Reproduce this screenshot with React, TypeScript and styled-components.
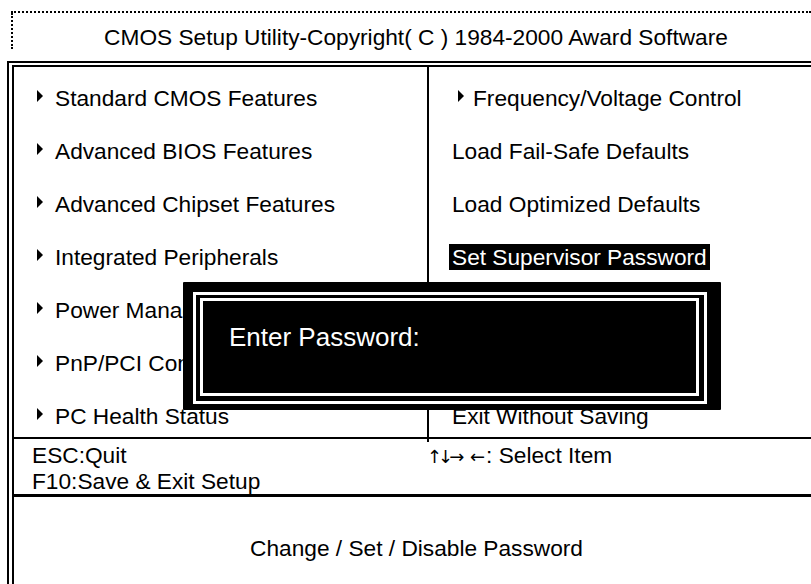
import React from 'react';
import styled, { createGlobalStyle } from 'styled-components';

const GlobalStyle = createGlobalStyle`
  html, body {
    margin: 0;
    padding: 0;
    background: #fff;
  }
  body {
    font-family: "Liberation Sans", Arial, sans-serif;
    color: #000;
  }
`;

const Screen = styled.div`
  position: relative;
  width: 811px;
  height: 584px;
  overflow: hidden;
  background: #fff;
  padding-top: 11px;
  box-sizing: border-box;
  font-size: 22.7px;
`;

const TitleBar = styled.div`
  position: relative;
  margin-left: 11px;
  height: 48px;
  padding-left: 10px;
  border-top: 2px dotted #000;
  display: flex;
  align-items: center;
  justify-content: center;

  &::before {
    content: '';
    position: absolute;
    left: 0;
    top: 0;
    height: 36px;
    border-left: 2px dotted #000;
  }
`;

const MainFrame = styled.div`
  margin-left: 7px;
  border-left: 7px double #000;
  border-top: 6px double #000;
`;

const Menu = styled.div`
  display: grid;
  grid-template-columns: 415px 1fr;
  height: 370px;
`;

const Column = styled.div<{ $divider?: boolean }>`
  display: grid;
  grid-template-rows: repeat(7, 53px);
  padding-top: 4px;
  box-sizing: border-box;
  border-right: ${({ $divider }) => ($divider ? '2px solid #000' : 'none')};
`;

const Item = styled.div<{ $indent: number }>`
  display: flex;
  align-items: center;
  padding-left: ${({ $indent }) => $indent}px;
  white-space: nowrap;
`;

const Arrow = styled.span<{ $gap: number }>`
  display: inline-block;
  width: 0;
  height: 0;
  border-left: 6px solid #000;
  border-top: 6px solid transparent;
  border-bottom: 6px solid transparent;
  margin-right: ${({ $gap }) => $gap}px;
  transform: translateY(-2px);
`;

const Label = styled.span<{ $selected?: boolean }>`
  display: inline-block;
  line-height: 26px;
  padding: 0 3px;
  margin-left: -3px;
  background: ${({ $selected }) => ($selected ? '#000' : 'transparent')};
  color: ${({ $selected }) => ($selected ? '#fff' : '#000')};
`;

const KeyBar = styled.div`
  display: grid;
  grid-template-columns: 413px 1fr;
  height: 60px;
  box-sizing: border-box;
  padding-top: 3px;
  border-top: 2px solid #000;
  border-bottom: 3px solid #000;
  line-height: 26px;
`;

const KeyColumn = styled.div<{ $pad: number }>`
  padding-left: ${({ $pad }) => $pad}px;
  white-space: nowrap;
`;

const KeyArrows = styled.span`
  font-family: "DejaVu Sans", sans-serif;
  font-size: 18px;
  letter-spacing: -4px;
  word-spacing: 8px;
  color: #000;
  margin-right: 5px;
`;

const HelpArea = styled.div`
  height: 120px;
  padding-top: 38px;
  padding-left: 8px;
  box-sizing: border-box;
  text-align: center;
  line-height: 26px;
`;

const Dialog = styled.div`
  position: absolute;
  left: 183px;
  top: 282px;
  width: 538px;
  height: 128px;
  box-sizing: border-box;
  padding: 10px 14px 6px 10px;
  background: #000;
  border-radius: 1px;
`;

const OuterFrame = styled.div`
  height: 100%;
  box-sizing: border-box;
  border: 3px solid #fff;
  padding: 3px 5px 5px 4px;
`;

const InnerFrame = styled.div`
  height: 100%;
  box-sizing: border-box;
  border: 3px solid #fff;
  padding: 21px 0 0 26px;
  color: #fff;
  font-size: 26px;
  line-height: 30px;
`;

interface MenuEntry {
  label: string;
  sub?: boolean;
  selected?: boolean;
}

const leftItems: MenuEntry[] = [
  { label: 'Standard CMOS Features', sub: true },
  { label: 'Advanced BIOS Features', sub: true },
  { label: 'Advanced Chipset Features', sub: true },
  { label: 'Integrated Peripherals', sub: true },
  { label: 'Power Management Setup', sub: true },
  { label: 'PnP/PCI Configurations', sub: true },
  { label: 'PC Health Status', sub: true },
];

const rightItems: MenuEntry[] = [
  { label: 'Frequency/Voltage Control', sub: true },
  { label: 'Load Fail-Safe Defaults' },
  { label: 'Load Optimized Defaults' },
  { label: 'Set Supervisor Password', selected: true },
  { label: 'Set User Password' },
  { label: 'Save & Exit Setup' },
  { label: 'Exit Without Saving' },
];

const App: React.FC = () => (
  <>
    <GlobalStyle />
    <Screen>
      <TitleBar>CMOS Setup Utility-Copyright( C ) 1984-2000 Award Software</TitleBar>
      <MainFrame>
        <Menu>
          <Column $divider>
            {leftItems.map((item) => (
              <Item key={item.label} $indent={23}>
                {item.sub && <Arrow $gap={12} />}
                <Label>{item.label}</Label>
              </Item>
            ))}
          </Column>
          <Column>
            {rightItems.map((item) => (
              <Item key={item.label} $indent={item.sub ? 29 : 23}>
                {item.sub && <Arrow $gap={9} />}
                <Label $selected={item.selected}>{item.label}</Label>
              </Item>
            ))}
          </Column>
        </Menu>
        <KeyBar>
          <KeyColumn $pad={18}>
            ESC:Quit
            <br />
            F10:Save &amp; Exit Setup
          </KeyColumn>
          <KeyColumn $pad={0}>
            <KeyArrows>↑↓→ ←</KeyArrows>: Select Item
          </KeyColumn>
        </KeyBar>
        <HelpArea>Change / Set / Disable Password</HelpArea>
      </MainFrame>
      <Dialog>
        <OuterFrame>
          <InnerFrame>Enter Password:</InnerFrame>
        </OuterFrame>
      </Dialog>
    </Screen>
  </>
);

export default App;
